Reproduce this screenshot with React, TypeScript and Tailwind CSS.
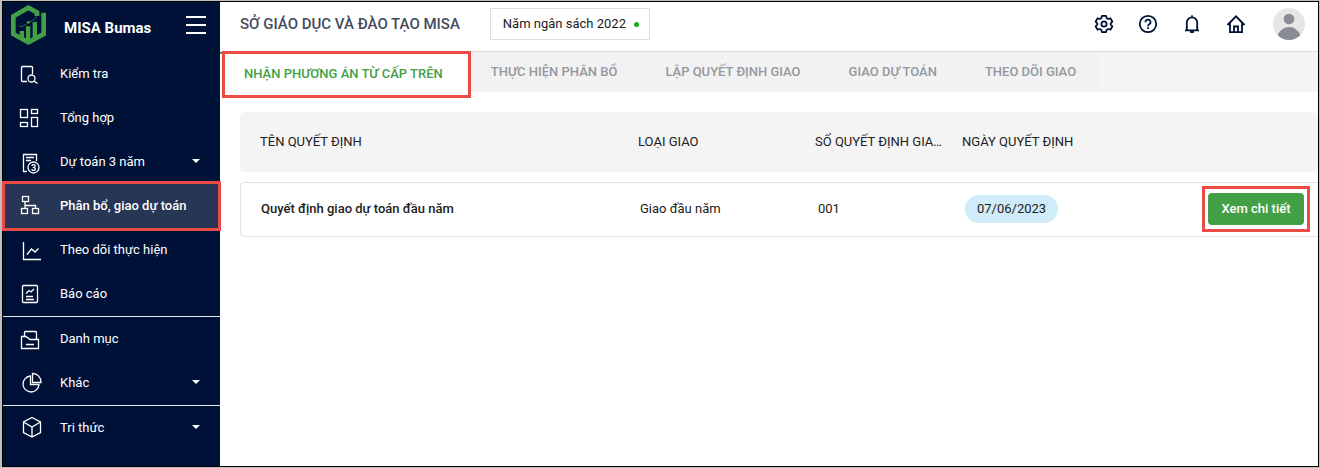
import React, { useState } from 'react';

type MenuItem = {
  label: string;
  icon: React.ReactNode;
  expandable?: boolean;
};

type Decision = {
  name: string;
  kind: string;
  number: string;
  date: string;
};

const menuGroups: MenuItem[][] = [
  [
    {
      label: 'Kiểm tra',
      icon: (
        <>
          <path d="M9 21.5H4.5a1 1 0 0 1-1-1v-13a1 1 0 0 1 1-1h9a1 1 0 0 1 1 1V14" />
          <circle cx="13.5" cy="18.5" r="3.5" />
          <path d="M16 21l3.5 2.5" />
        </>
      ),
    },
    {
      label: 'Tổng hợp',
      icon: (
        <>
          <rect x="2.5" y="5.5" width="7" height="8" />
          <rect x="13.5" y="5.5" width="6" height="4" />
          <rect x="2.5" y="18.5" width="7" height="4" />
          <rect x="13.5" y="13.5" width="6" height="9" />
        </>
      ),
    },
    {
      label: 'Dự toán 3 năm',
      expandable: true,
      icon: (
        <>
          <path d="M9 23.5H5.5v-17h13V13M8 9.5h8M8 12.5h5" />
          <circle cx="15.5" cy="19.5" r="5.5" />
          <text x="15.5" y="23" textAnchor="middle" fontSize="9" fontWeight="700" fill="currentColor" stroke="none">
            3
          </text>
        </>
      ),
    },
    {
      label: 'Phân bổ, giao dự toán',
      icon: (
        <>
          <rect x="4.5" y="4.5" width="6" height="5" />
          <rect x="3.5" y="16.5" width="6" height="5" />
          <rect x="14.5" y="16.5" width="6" height="5" />
          <path d="M7 9.5v7M7 13.5h10.5v3" />
        </>
      ),
    },
    {
      label: 'Theo dõi thực hiện',
      icon: <path d="M5.5 6v17.5H23M9 18.5l4.5-5.5 3.500 3 3.500-3.500" />,
    },
    {
      label: 'Báo cáo',
      icon: (
        <>
          <rect x="4.5" y="5.5" width="15" height="17" rx="1" />
          <path d="M8 13.5l3-3 2 1.5 3-3M8 16.5h7M8 19.5h8" />
        </>
      ),
    },
  ],
  [
    {
      label: 'Danh mục',
      icon: (
        <>
          <path d="M6.5 11V7.5a1 1 0 0 1 1-1h10a1 1 0 0 1 1 1V14" />
          <path d="M3.5 11.5h4.5l4 3h8.5v9h-17zM8 19.5h8" />
        </>
      ),
    },
    {
      label: 'Khác',
      expandable: true,
      icon: (
        <>
          <path d="M12.5 7A8 8 0 1 0 21 15.5h-8.5z" />
          <path d="M14.5 4.5v9H23a8.5 8.5 0 0 0-8.5-9z" />
        </>
      ),
    },
  ],
  [
    {
      label: 'Tri thức',
      expandable: true,
      icon: <path d="M14 3.5l8.5 4.5v10.5L14 23l-8.5-4.5V8zM5.5 8L14 13l8.5-5M14 13v10" />,
    },
  ],
];

const tabs = [
  'NHẬN PHƯƠNG ÁN TỪ CẤP TRÊN',
  'THỰC HIỆN PHÂN BỔ',
  'LẬP QUYẾT ĐỊNH GIAO',
  'GIAO DỰ TOÁN',
  'THEO DÕI GIAO',
];

const decisions: Decision[] = [
  { name: 'Quyết định giao dự toán đầu năm', kind: 'Giao đầu năm', number: '001', date: '07/06/2023' },
];

function Logo(): React.JSX.Element {
  return (
    <svg className="w-[35px] h-10 shrink-0" viewBox="33 15 105 120" fill="none" aria-hidden="true">
      <path d="M111 48V37L85 23 40 49v53l45 25 46-25V38" stroke="#43a047" strokeWidth="14" />
      <path d="M59 93h13v24l-13-7zM78 79h13v42l-6 4-7-4zM98 66h13v44l-13 7z" fill="#43a047" />
      <path d="M58 80c14 0 20-7 27-13 8-1 18-8 25-18" stroke="#2c7a4b" strokeWidth="3" />
      <circle cx="85" cy="67" r="4" fill="#43a047" />
    </svg>
  );
}

// Red frame that points the reader to a control
function Highlight({ className }: { className: string }): React.JSX.Element {
  return <span className={`absolute z-10 border-3 border-[#eb4b45] pointer-events-none ${className}`} />;
}

function Sidebar({ active, onSelect }: { active: string; onSelect: (label: string) => void }): React.JSX.Element {
  return (
    <aside className="w-[217px] shrink-0 bg-[#001137] text-white">
      <div className="h-[50px] flex items-center pl-2 pr-3.5 pb-1">
        <Logo />
        <span className="ml-[18px] mt-1.5 text-[15px] font-bold">MISA Bumas</span>
        <button aria-label="Thu gọn menu" className="ml-auto w-5 flex flex-col gap-1.5">
          <span className="h-0.5 bg-white" />
          <span className="h-0.5 bg-white" />
          <span className="h-0.5 bg-white" />
        </button>
      </div>

      <nav>
        {menuGroups.map((group, i) => (
          <ul key={i} className={i > 0 ? 'border-t border-gray-200' : ''}>
            {group.map((item) => (
              <li key={item.label} className="relative">
                <button
                  onClick={() => onSelect(item.label)}
                  className={`w-full h-11 flex items-center pl-[15px] pr-5 text-[13px] ${
                    item.label === active ? 'bg-[#283655] font-medium' : 'font-normal'
                  }`}
                >
                  <svg
                    className="w-6 h-7 mr-[18px] shrink-0"
                    viewBox="0 0 24 28"
                    fill="none"
                    stroke="currentColor"
                    strokeWidth="1.3"
                    aria-hidden="true"
                  >
                    {item.icon}
                  </svg>
                  <span>{item.label}</span>
                  {item.expandable && (
                    <svg className="ml-auto mb-0.5 w-2 h-1" viewBox="0 0 8 4" fill="currentColor" aria-hidden="true">
                      <path d="M0 0h8L4 4z" />
                    </svg>
                  )}
                </button>
                {item.label === active && <Highlight className="-inset-y-[3px] -inset-x-px" />}
              </li>
            ))}
          </ul>
        ))}
      </nav>
    </aside>
  );
}

function HeaderIcon({ label, children }: { label: string; children: React.ReactNode }): React.JSX.Element {
  return (
    <button aria-label={label}>
      <svg
        className="w-5 h-5"
        viewBox="0 0 20 20"
        fill="none"
        stroke="currentColor"
        strokeWidth="1.8"
        strokeLinejoin="round"
        aria-hidden="true"
      >
        {children}
      </svg>
    </button>
  );
}

function TopBar(): React.JSX.Element {
  return (
    <header className="h-[50px] flex items-center pl-5 pr-[13px] pb-[5px] border-b border-[#dddddd] text-[#001137]">
      <h1 className="text-[15px] font-medium text-[#444b5c]">SỞ GIÁO DỤC VÀ ĐÀO TẠO MISA</h1>
      <button className="ml-[30px] w-40 h-8 flex items-center justify-between pl-3 pr-2.5 border border-[#dddddd] text-[13px] text-[#212121]">
        Năm ngân sách 2022
        <span className="w-[5px] h-[5px] rounded-full bg-[#14ae14]" />
      </button>

      <div className="ml-auto flex items-center gap-6">
        <HeaderIcon label="Thiết lập">
          <path d="M8 1.800h4l.6 2.300 1.500.9 2.300-.7 2 3.400L16.700 9.300v1.400l1.700 1.600-2 3.400-2.300-.7-1.500.9-.6 2.300H8l-.6-2.300-1.500-.9-2.300.7-2-3.400 1.700-1.600V9.300L1.600 7.700l2-3.400 2.300.7 1.500-.9z" />
          <circle cx="10" cy="10" r="2.600" />
        </HeaderIcon>
        <HeaderIcon label="Trợ giúp">
          <circle cx="10" cy="10" r="8.200" />
          <path d="M7.500 8.200a2.500 2.500 0 1 1 3.700 2.100c-.8.5-1.200.9-1.200 1.900M10 13.300v1.700" />
        </HeaderIcon>
        <HeaderIcon label="Thông báo">
          <path d="M3 16.300h14M4.800 16V8.500a5.200 5.200 0 0 1 10.400 0V16" />
          <path d="M8.200 18h3.600M9.200 2.200h1.600" />
        </HeaderIcon>
        <HeaderIcon label="Trang chủ">
          <path d="M1.500 11L10 2.300l8.500 8.700M4 9v9.200h12V9M8 18v-5.500h4V18" strokeLinejoin="miter" />
        </HeaderIcon>
      </div>

      <button aria-label="Tài khoản" className="ml-[27px]">
        <svg className="w-8 h-8 rounded-full" viewBox="0 0 32 32" aria-hidden="true">
          <rect width="32" height="32" fill="#e6e6e6" />
          <circle cx="16" cy="11" r="5.300" fill="#898c96" />
          <path d="M4.500 27.500C7 22 11 19 16 19s9 3 11.500 8.500L23 32H9z" fill="#898c96" />
        </svg>
      </button>
    </header>
  );
}

function DecisionTable(): React.JSX.Element {
  return (
    <table className="w-full table-fixed border-separate border-spacing-x-0 border-spacing-y-2.5 text-left text-[13px] text-[#212121]">
      <thead>
        <tr className="h-[60px] bg-[#f4f4f4]">
          <th className="w-[378px] pl-5 font-normal rounded-l-[5px] bg-[#f4f4f4]">TÊN QUYẾT ĐỊNH</th>
          <th className="w-[177px] pl-5 font-normal">LOẠI GIAO</th>
          <th className="w-[147px] pl-5 font-normal truncate">SỐ QUYẾT ĐỊNH GIAO</th>
          <th className="w-[160px] pl-5 font-normal">NGÀY QUYẾT ĐỊNH</th>
          <th aria-label="Thao tác" className="rounded-r-[5px]" />
        </tr>
      </thead>
      <tbody>
        {decisions.map((decision) => (
          <tr key={decision.number} className="h-[55px]">
            <td className="pl-5 pb-0.5 font-medium border-y border-l border-[#dfe0e8] rounded-l-[5px]">{decision.name}</td>
            <td className="pl-[22px] pb-0.5 border-y border-[#dfe0e8]">{decision.kind}</td>
            <td className="pl-[23px] pb-0.5 border-y border-[#dfe0e8]">{decision.number}</td>
            <td className="pl-[23px] pb-0.5 border-y border-[#dfe0e8]">
              <span className="inline-flex items-center h-7 px-3 rounded-full bg-[#cfecf8]">{decision.date}</span>
            </td>
            <td className="pr-3.5 pb-0.5 border-y border-[#dfe0e8]">
              <div className="relative w-24 ml-auto">
                <button className="w-full h-8 rounded bg-[#43a047] text-white font-medium">Xem chi tiết</button>
                <Highlight className="-inset-x-1.5 -inset-y-[7px]" />
              </div>
            </td>
          </tr>
        ))}
      </tbody>
    </table>
  );
}

export default function App(): React.JSX.Element {
  const [activeMenu, setActiveMenu] = useState('Phân bổ, giao dự toán');
  const [activeTab, setActiveTab] = useState(tabs[0]);

  return (
    <div className="min-h-screen flex flex-col border border-l-2 border-[#bfbfbf] font-[Roboto,sans-serif]">
      <div className="flex-1 flex border border-black bg-white">
        <Sidebar active={activeMenu} onSelect={setActiveMenu} />

        <div className="flex-1 min-w-0">
          <TopBar />

          {/* Tabs */}
          <div role="tablist" className="flex h-10 bg-[#f4f4f4]">
            {tabs.map((tab) => (
              <div key={tab} className="relative">
                <button
                  role="tab"
                  aria-selected={tab === activeTab}
                  onClick={() => setActiveTab(tab)}
                  className={`h-full px-6 text-[13px] font-medium whitespace-nowrap ${
                    tab === activeTab
                      ? 'bg-white text-[#43a047] border-t-2 border-[#43a047] pt-0.5'
                      : 'bg-[#f2f2f2] text-[#9498a0]'
                  }`}
                >
                  {tab}
                </button>
                {tab === activeTab && <Highlight className="left-0.5 -right-1 -top-px -bottom-1.5" />}
              </div>
            ))}
          </div>

          <main className="pl-5 pt-2.5">
            <DecisionTable />
          </main>
        </div>
      </div>
    </div>
  );
}
